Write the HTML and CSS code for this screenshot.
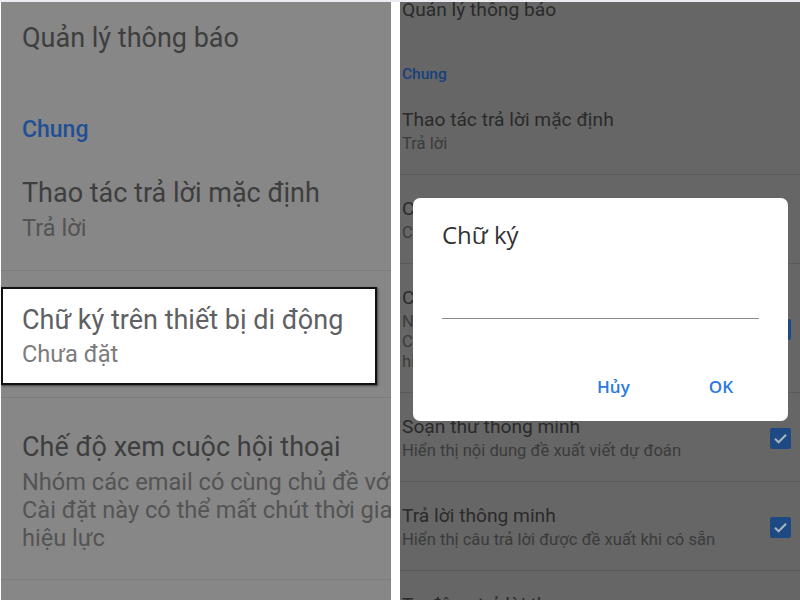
FILE: index.html
```html
<!DOCTYPE html>
<html lang="vi">
<head>
    <meta charset="UTF-8">
    <title>Chữ ký trên thiết bị di động</title>
    <link rel="stylesheet" href="styles.css">
</head>
<body>
<div class="shots">
    <!-- zoomed crop with the marked row -->
    <div class="shot shot-zoom">
        <div class="zoom-header">Quản lý thông báo</div>
        <div class="zoom-section">Chung</div>
        <div class="zoom-item">
            <div class="zoom-title">Thao tác trả lời mặc định</div>
            <div class="zoom-sub">Trả lời</div>
        </div>
        <div class="zoom-item zoom-item-marked">
            <div class="marked-box">
                <div class="zoom-title">Chữ ký trên thiết bị di động</div>
                <div class="zoom-sub">Chưa đặt</div>
            </div>
        </div>
        <div class="zoom-item zoom-item-long">
            <div class="zoom-title">Chế độ xem cuộc hội thoại</div>
            <div class="zoom-sub">Nhóm các email có cùng chủ đề với nhau.</div>
            <div class="zoom-sub zoom-sub-next">Cài đặt này có thể mất chút thời gian để có</div>
            <div class="zoom-sub zoom-sub-next">hiệu lực</div>
        </div>
    </div>

    <!-- phone screen with the signature dialog -->
    <div class="shot shot-phone">
        <div class="phone-header">Quản lý thông báo</div>
        <div class="phone-section">Chung</div>
        <div class="phone-item">
            <div class="phone-text">
                <div class="phone-title">Thao tác trả lời mặc định</div>
                <div class="phone-sub">Trả lời</div>
            </div>
        </div>
        <div class="phone-item">
            <div class="phone-text">
                <div class="phone-title">Chữ ký trên thiết bị di động</div>
                <div class="phone-sub">Chưa đặt</div>
            </div>
        </div>
        <div class="phone-item">
            <div class="phone-text">
                <div class="phone-title">Chế độ xem cuộc hội thoại</div>
                <div class="phone-sub">Nhóm các email có cùng chủ đề với nhau.</div>
                <div class="phone-sub">Cài đặt này có thể mất chút thời gian để có</div>
                <div class="phone-sub">hiệu lực</div>
            </div>
            <span class="check"><svg viewBox="0 0 21 21" width="21" height="21"><path d="M5 10.8l3.6 3.5 7.4-7.6" fill="none" stroke="#aab4c3" stroke-width="2"/></svg></span>
        </div>
        <div class="phone-item">
            <div class="phone-text">
                <div class="phone-title">Soạn thư thông minh</div>
                <div class="phone-sub">Hiển thị nội dung đề xuất viết dự đoán</div>
            </div>
            <span class="check"><svg viewBox="0 0 21 21" width="21" height="21"><path d="M5 10.8l3.6 3.5 7.4-7.6" fill="none" stroke="#aab4c3" stroke-width="2"/></svg></span>
        </div>
        <div class="phone-item">
            <div class="phone-text">
                <div class="phone-title">Trả lời thông minh</div>
                <div class="phone-sub">Hiển thị câu trả lời được đề xuất khi có sẵn</div>
            </div>
            <span class="check"><svg viewBox="0 0 21 21" width="21" height="21"><path d="M5 10.8l3.6 3.5 7.4-7.6" fill="none" stroke="#aab4c3" stroke-width="2"/></svg></span>
        </div>
        <div class="phone-item">
            <div class="phone-text">
                <div class="phone-title">Tự động trả lời thư</div>
            </div>
        </div>

        <div class="dialog">
            <div class="dialog-title">Chữ ký</div>
            <div class="dialog-input"></div>
            <div class="dialog-actions">
                <button type="button">Hủy</button>
                <button type="button">OK</button>
            </div>
        </div>
    </div>
</div>
</body>
</html>
```

FILE: styles.css
```css
* {
    padding: 0;
    margin: 0;
    box-sizing: border-box;
}
body {
    font-family: Roboto, "Noto Sans", sans-serif;
    background-color: #fff;
    border-top: 2px solid #ececf0;
}
.shots {
    display: flex;
    height: 598px;
}
.shot {
    height: 598px;
    overflow: hidden;
    white-space: nowrap;
}

/* left: zoomed crop */
.shot-zoom {
    width: 390px;
    margin-left: 1px;
    background-color: #878787;
}
.zoom-header {
    height: 80px;
    padding: 21px 21px 0;
    font-size: 27px;
    line-height: 30px;
    color: #3e3e3e;
}
.zoom-section {
    height: 66px;
    padding: 33px 21px 0;
    font-size: 23px;
    line-height: 30px;
    font-weight: 500;
    color: #1f4f95;
}
.zoom-item {
    padding: 29px 21px 28px;
    border-bottom: 1px solid #7b7b7b;
}
.zoom-title {
    font-size: 27px;
    line-height: 32px;
    color: #3e3e3e;
}
.zoom-sub {
    margin-top: 5px;
    font-size: 23.6px;
    line-height: 28px;
    color: #545454;
}
.zoom-sub-next {
    margin-top: 0;
}
.zoom-item-marked {
    padding: 16px 0 12px;
}
.zoom-item-long {
    padding: 33px 21px 27px;
}
.marked-box {
    width: 376px;
    height: 98px;
    padding: 15px 19px;
    background-color: #fff;
    border: 2px solid #111;
    box-shadow: 1px 1px 2px rgba(0, 0, 0, 0.5);
}
.marked-box .zoom-title {
    color: #5e6063;
}
.marked-box .zoom-sub {
    margin-top: 4px;
    color: #7c7c7c;
}

/* right: phone with dialog */
.shot-phone {
    position: relative;
    width: 400px;
    margin-left: 9px;
    background-color: #666;
}
.phone-header {
    height: 16px;
    padding-left: 2px;
    font-size: 19.2px;
    line-height: 16px;
    color: #2a2a2a;
}
.phone-section {
    height: 68px;
    padding: 46px 2px 0;
    font-size: 15.5px;
    line-height: 20px;
    font-weight: 500;
    color: #17407e;
}
.phone-item {
    display: flex;
    align-items: center;
    padding: 22px 9px 20px 2px;
    border-bottom: 1px solid #5a5a5a;
}
.phone-title {
    font-size: 19.2px;
    line-height: 24px;
    color: #2a2a2a;
}
.phone-sub {
    font-size: 16.6px;
    line-height: 20px;
    color: #3b3b3b;
}
.phone-title + .phone-sub {
    margin-top: 2px;
}
.check {
    width: 21px;
    height: 21px;
    margin-left: auto;
    border-radius: 2px;
    background-color: #1e4a84;
}
.check svg {
    display: block;
}
.dialog {
    position: absolute;
    left: 13px;
    top: 196px;
    width: 375px;
    height: 223px;
    background-color: #fff;
    border-radius: 7px;
}
.dialog-title {
    padding: 22px 29px 0;
    font-family: "Open Sans", Roboto, sans-serif;
    font-size: 24px;
    line-height: 30px;
    color: #333;
}
.dialog-input {
    height: 29px;
    margin: 40px 29px 0;
    border-bottom: 1.5px solid #8c8c8c;
}
.dialog-actions {
    display: flex;
    justify-content: flex-end;
    gap: 35px;
    margin-top: 50px;
    padding-right: 33px;
}
.dialog-actions button {
    padding: 8px 22px;
    border: none;
    background: none;
    font-family: "Open Sans", Roboto, sans-serif;
    font-size: 17px;
    line-height: 20px;
    font-weight: 600;
    color: #2a7ae2;
}
```
